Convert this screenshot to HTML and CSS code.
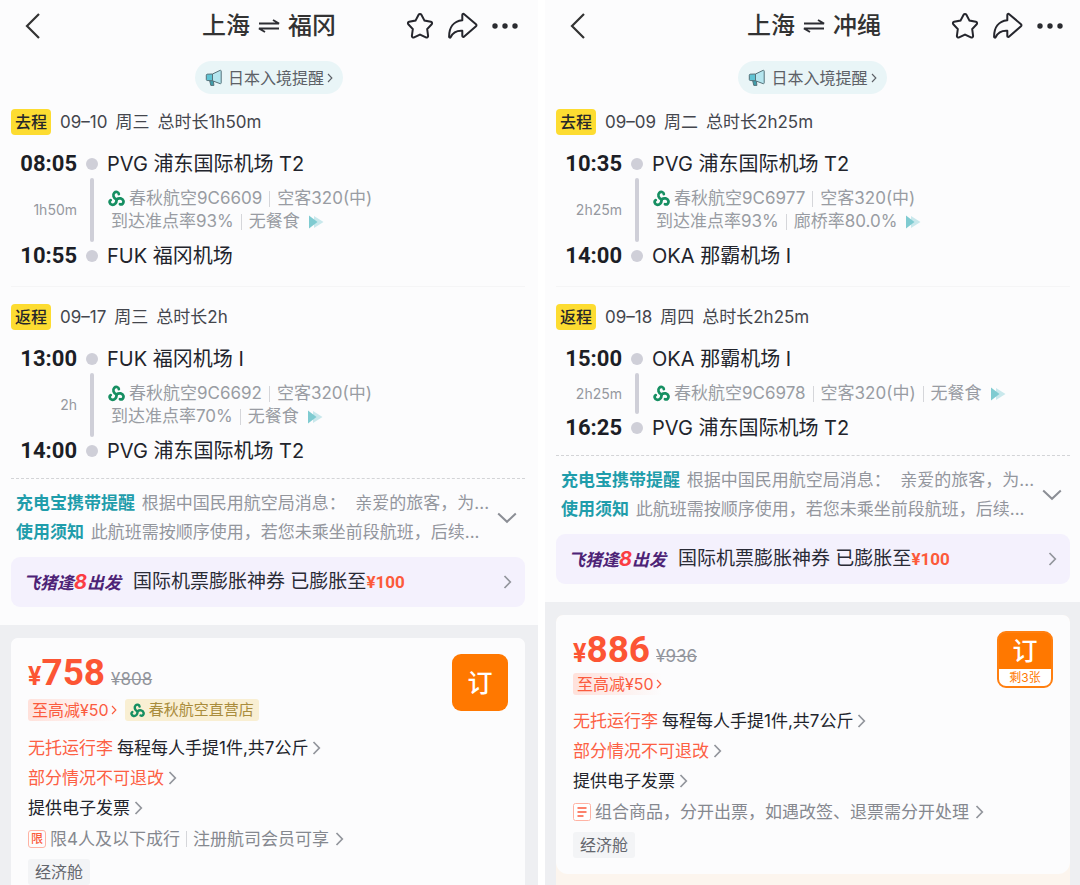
FILE: index.html
```html
<!DOCTYPE html>
<html lang="zh-CN">
<head>
<meta charset="utf-8">
<meta name="viewport" content="width=device-width, initial-scale=1">
<title>往返机票</title>
<link rel="stylesheet" href="styles.css">
</head>
<body>
<svg class="sprite" aria-hidden="true">
  <symbol id="i-back" viewBox="0 0 16 28"><path d="M14 2 2 14l12 12" fill="none" stroke="#333" stroke-width="2.2"/></symbol>
  <symbol id="i-swap" viewBox="0 0 22 14"><path d="M1 4.500h20L15 1M21 9.500H1l6 3.500" fill="none" stroke="#2c2d33" stroke-width="1.900" stroke-linejoin="bevel"/></symbol>
  <symbol id="i-star" viewBox="0 0 28 28"><path d="M12.600 2.800a1.600 1.600 0 0 1 2.800 0l3.100 5.800 6.400 1.200a1.500 1.500 0 0 1 .8 2.500l-4.500 4.800.9 6.700a1.500 1.500 0 0 1-2.200 1.600L14 22.600l-5.900 2.800a1.500 1.500 0 0 1-2.200-1.600l.9-6.700-4.500-4.800a1.500 1.500 0 0 1 .8-2.500l6.400-1.200z" fill="none" stroke="#25262d" stroke-width="2"/></symbol>
  <symbol id="i-share" viewBox="0 0 30 28"><path d="M16.200 2.200 28 12.200a1.300 1.300 0 0 1 0 2L16.200 24.600a1.100 1.100 0 0 1-1.900-.8v-5.100C8.500 18.300 5 20.200 2.600 25.200a.8.8 0 0 1-1.500-.3C1 15.600 5.500 9.200 14.300 8.300V3a1.100 1.100 0 0 1 1.900-.8z" fill="none" stroke="#25262d" stroke-width="2" stroke-linejoin="round"/></symbol>
  <symbol id="i-more" viewBox="0 0 26 6"><g fill="#2b2c31"><circle cx="3" cy="3" r="2.700"/><circle cx="13" cy="3" r="2.700"/><circle cx="23" cy="3" r="2.700"/></g></symbol>
  <symbol id="i-horn" viewBox="0 0 18 18"><path d="M4.500 11h3.800l.6 5.400H5.800z" fill="#3f9fac" stroke="#55727a"/><path d="M2 5.200 7.500 5v6.800L2.200 11.500a1 1 0 0 1-.9-1V6.200a1 1 0 0 1 .7-1z" fill="#5fc3d3" stroke="#55727a"/><path d="M7.500 5 15 1.400a.8.8 0 0 1 1.200.7v11.800a.8.8 0 0 1-1.200.7L7.500 11.800z" fill="#b5e6ef" stroke="#55727a"/></symbol>
  <symbol id="i-chev" viewBox="0 0 9 16"><path d="m1.500 2 5.800 6-5.800 6" fill="none" stroke="currentColor" stroke-width="1.700"/></symbol>
  <symbol id="i-down" viewBox="0 0 20 12"><path d="m1.200 1.500 8.800 8.300 8.800-8.300" fill="none" stroke="currentColor" stroke-width="2"/></symbol>
  <symbol id="i-spring" viewBox="0 0 18 18"><g fill="none" stroke="#168f62" stroke-width="2.900" stroke-linecap="round"><path d="M9 10C5.600 8.600 4.800 5 6.600 3 8.300 1.200 11.300 1.900 11.500 4.300"/><path d="M9 10C5.600 8.600 4.800 5 6.600 3 8.300 1.200 11.300 1.900 11.500 4.300" transform="rotate(120 9 10)"/><path d="M9 10C5.600 8.600 4.800 5 6.600 3 8.300 1.200 11.300 1.900 11.500 4.300" transform="rotate(240 9 10)"/></g></symbol>
  <symbol id="i-fast" viewBox="0 0 16 14"><path d="M6 1v12l9.500-6z" fill="#c9e8ec"/><path d="M1 .5v13L9.500 7z" fill="#7fcbd1"/></symbol>
  <symbol id="i-note" viewBox="0 0 18 18"><rect x=".5" y=".5" width="17" height="17" rx="2" fill="#fff" stroke="#ffb3a4"/><path d="M4.500 5h9M4.500 9h9M4.500 13h6" stroke="#fb5a3c" stroke-width="1.600"/></symbol>
</svg>

<main class="board">
  <section class="panel">
    <header class="topbar">
      <button class="icon-btn" aria-label="返回"><svg class="ic-back"><use href="#i-back"/></svg></button>
      <h1 class="route"><span>上海</span><svg class="ic-swap"><use href="#i-swap"/></svg><span>福冈</span></h1>
      <div class="actions">
        <button class="icon-btn" aria-label="收藏"><svg class="ic-star"><use href="#i-star"/></svg></button>
        <button class="icon-btn" aria-label="分享"><svg class="ic-share"><use href="#i-share"/></svg></button>
        <button class="icon-btn" aria-label="更多"><svg class="ic-more"><use href="#i-more"/></svg></button>
      </div>
    </header>
    <a class="entry-tip" href="#"><svg class="ic-horn"><use href="#i-horn"/></svg><span>日本入境提醒</span><svg class="ic-chev-s"><use href="#i-chev"/></svg></a>

    <article class="segment">
      <h2 class="seg-head"><span class="seg-tag">去程</span><span>09–10</span><span>周三</span><span>总时长1h50m</span></h2>
      <div class="leg">
        <time class="time">08:05</time><i class="dot"></i><p class="airport">PVG 浦东国际机场 T2</p>
        <span class="duration">1h50m</span><i class="track"></i>
        <div class="details">
          <p class="detail"><svg class="ic-spring"><use href="#i-spring"/></svg><span>春秋航空9C6609</span><i class="sep"></i><span>空客320(中)</span></p>
          <p class="detail detail-sub"><span>到达准点率93%</span><i class="sep"></i><span>无餐食</span><svg class="ic-fast"><use href="#i-fast"/></svg></p>
        </div>
        <time class="time">10:55</time><i class="dot"></i><p class="airport">FUK 福冈机场</p>
      </div>
    </article>
    <article class="segment">
      <h2 class="seg-head"><span class="seg-tag">返程</span><span>09–17</span><span>周三</span><span>总时长2h</span></h2>
      <div class="leg">
        <time class="time">13:00</time><i class="dot"></i><p class="airport">FUK 福冈机场 I</p>
        <span class="duration">2h</span><i class="track"></i>
        <div class="details">
          <p class="detail"><svg class="ic-spring"><use href="#i-spring"/></svg><span>春秋航空9C6692</span><i class="sep"></i><span>空客320(中)</span></p>
          <p class="detail detail-sub"><span>到达准点率70%</span><i class="sep"></i><span>无餐食</span><svg class="ic-fast"><use href="#i-fast"/></svg></p>
        </div>
        <time class="time">14:00</time><i class="dot"></i><p class="airport">PVG 浦东国际机场 T2</p>
      </div>
    </article>

    <div class="notices">
      <div class="notice-text">
        <p class="notice"><b>充电宝携带提醒</b> 根据中国民用航空局消息：&nbsp; 亲爱的旅客，为...</p>
        <p class="notice"><b>使用须知</b> 此航班需按顺序使用，若您未乘坐前段航班，后续...</p>
      </div>
      <button class="icon-btn notice-more" aria-label="展开"><svg class="ic-down"><use href="#i-down"/></svg></button>
    </div>
    <a class="promo" href="#"><span class="promo-logo">飞猪逢<em>8</em>出发</span><span class="promo-text">国际机票膨胀神券 已膨胀至<b>¥100</b></span><svg class="ic-chev"><use href="#i-chev"/></svg></a>

    <div class="offers">
      <article class="offer">
        <div class="offer-body">
          <div class="offer-main">
            <p class="price"><small>¥</small><strong>758</strong><del>¥808</del></p>
            <p class="tags"><a class="tag-cut" href="#">至高减¥50<svg class="ic-chev-s"><use href="#i-chev"/></svg></a><span class="tag-shop"><svg class="ic-spring-s"><use href="#i-spring"/></svg>春秋航空直营店</span></p>
            <ul class="rules">
              <li><a href="#"><span class="warn">无托运行李</span> 每程每人手提1件,共7公斤<svg class="ic-chev"><use href="#i-chev"/></svg></a></li>
              <li><a href="#"><span class="warn">部分情况不可退改</span><svg class="ic-chev"><use href="#i-chev"/></svg></a></li>
              <li><a href="#">提供电子发票<svg class="ic-chev"><use href="#i-chev"/></svg></a></li>
            </ul>
            <a class="limit" href="#"><span class="limit-tag">限</span><span>限4人及以下成行</span><i class="sep sep-tight"></i><span>注册航司会员可享</span><svg class="ic-chev"><use href="#i-chev"/></svg></a>
            <p class="cabin">经济舱</p>
          </div>
          <button class="book">订</button>
        </div>
      </article>
    </div>
  </section>

  <section class="panel">
    <header class="topbar">
      <button class="icon-btn" aria-label="返回"><svg class="ic-back"><use href="#i-back"/></svg></button>
      <h1 class="route"><span>上海</span><svg class="ic-swap"><use href="#i-swap"/></svg><span>冲绳</span></h1>
      <div class="actions">
        <button class="icon-btn" aria-label="收藏"><svg class="ic-star"><use href="#i-star"/></svg></button>
        <button class="icon-btn" aria-label="分享"><svg class="ic-share"><use href="#i-share"/></svg></button>
        <button class="icon-btn" aria-label="更多"><svg class="ic-more"><use href="#i-more"/></svg></button>
      </div>
    </header>
    <a class="entry-tip" href="#"><svg class="ic-horn"><use href="#i-horn"/></svg><span>日本入境提醒</span><svg class="ic-chev-s"><use href="#i-chev"/></svg></a>

    <article class="segment">
      <h2 class="seg-head"><span class="seg-tag">去程</span><span>09–09</span><span>周二</span><span>总时长2h25m</span></h2>
      <div class="leg">
        <time class="time">10:35</time><i class="dot"></i><p class="airport">PVG 浦东国际机场 T2</p>
        <span class="duration">2h25m</span><i class="track"></i>
        <div class="details">
          <p class="detail"><svg class="ic-spring"><use href="#i-spring"/></svg><span>春秋航空9C6977</span><i class="sep"></i><span>空客320(中)</span></p>
          <p class="detail detail-sub"><span>到达准点率93%</span><i class="sep"></i><span>廊桥率80.0%</span><svg class="ic-fast"><use href="#i-fast"/></svg></p>
        </div>
        <time class="time">14:00</time><i class="dot"></i><p class="airport">OKA 那霸机场 I</p>
      </div>
    </article>
    <article class="segment">
      <h2 class="seg-head"><span class="seg-tag">返程</span><span>09–18</span><span>周四</span><span>总时长2h25m</span></h2>
      <div class="leg">
        <time class="time">15:00</time><i class="dot"></i><p class="airport">OKA 那霸机场 I</p>
        <span class="duration">2h25m</span><i class="track"></i>
        <div class="details">
          <p class="detail"><svg class="ic-spring"><use href="#i-spring"/></svg><span>春秋航空9C6978</span><i class="sep"></i><span>空客320(中)</span><i class="sep"></i><span>无餐食</span><svg class="ic-fast"><use href="#i-fast"/></svg></p>
        </div>
        <time class="time">16:25</time><i class="dot"></i><p class="airport">PVG 浦东国际机场 T2</p>
      </div>
    </article>

    <div class="notices">
      <div class="notice-text">
        <p class="notice"><b>充电宝携带提醒</b> 根据中国民用航空局消息：&nbsp; 亲爱的旅客，为...</p>
        <p class="notice"><b>使用须知</b> 此航班需按顺序使用，若您未乘坐前段航班，后续...</p>
      </div>
      <button class="icon-btn notice-more" aria-label="展开"><svg class="ic-down"><use href="#i-down"/></svg></button>
    </div>
    <a class="promo" href="#"><span class="promo-logo">飞猪逢<em>8</em>出发</span><span class="promo-text">国际机票膨胀神券 已膨胀至<b>¥100</b></span><svg class="ic-chev"><use href="#i-chev"/></svg></a>

    <div class="offers">
      <article class="offer offer-compact">
        <div class="offer-body">
          <div class="offer-main">
            <p class="price"><small>¥</small><strong>886</strong><del>¥936</del></p>
            <p class="tags"><a class="tag-cut" href="#">至高减¥50<svg class="ic-chev-s"><use href="#i-chev"/></svg></a></p>
            <ul class="rules">
              <li><a href="#"><span class="warn">无托运行李</span> 每程每人手提1件,共7公斤<svg class="ic-chev"><use href="#i-chev"/></svg></a></li>
              <li><a href="#"><span class="warn">部分情况不可退改</span><svg class="ic-chev"><use href="#i-chev"/></svg></a></li>
              <li><a href="#">提供电子发票<svg class="ic-chev"><use href="#i-chev"/></svg></a></li>
            </ul>
            <a class="limit" href="#"><svg class="ic-note"><use href="#i-note"/></svg><span>组合商品，分开出票，如遇改签、退票需分开处理</span><svg class="ic-chev"><use href="#i-chev"/></svg></a>
            <p class="cabin">经济舱</p>
          </div>
          <button class="book book-stock"><span>订</span><small>剩3张</small></button>
        </div>
      </article>
    </div>
  </section>
</main>
</body>
</html>
```
FILE: styles.css
```css
* { box-sizing: border-box; }
body {
  margin: 0;
  background: #fff;
  color: #22242c;
  font-family: Inter, "Noto Sans CJK SC", sans-serif;
  font-size: 17px;
  line-height: 24px;
}
h1, h2, p, ul { margin: 0; padding: 0; font-weight: 400; }
ul { list-style: none; }
a { color: inherit; text-decoration: none; }
i { font-style: normal; }
svg { display: block; flex: none; }
button { font-family: inherit; border: 0; padding: 0; cursor: pointer; }
.sprite { position: absolute; width: 0; height: 0; }
.icon-btn { background: none; display: flex; align-items: center; }

.board { display: grid; grid-template-columns: 1fr 1fr; min-height: 100vh; }
.panel { --edge: 13px; display: flex; flex-direction: column; min-width: 0; margin-right: 2px; background: #fcfcfd; }
.panel + .panel { --edge: 10px; margin: 0 0 0 5px; }

.topbar { display: grid; grid-template-columns: 1fr auto 1fr; align-items: center; height: 52px; padding: 0 calc(var(--edge) + 7px) 0 20px; }
.topbar > .icon-btn { margin-left: 5px; }
.route { display: flex; align-items: center; gap: 8px; font-size: 24px; line-height: 32px; font-weight: 500; color: #333; }
.actions { display: flex; justify-content: flex-end; gap: 14px; }
.ic-back { width: 16px; height: 28px; }
.ic-swap { width: 22px; height: 14px; }
.ic-star { width: 28px; height: 28px; }
.ic-share { width: 30px; height: 28px; }
.ic-more { width: 26px; height: 6px; }

.entry-tip { align-self: center; display: flex; align-items: center; height: 33px; margin-top: 9px; padding: 0 10px; border-radius: 17px; background: #e9f5f7; color: #5c6066; font-size: 16px; }
.entry-tip span { margin: 0 3px 0 5px; }
.ic-horn { width: 18px; height: 18px; }
.ic-chev-s { width: 6px; height: 12px; }
.ic-chev { width: 9px; height: 16px; color: #92959c; }

.segment { margin: 0 var(--edge) 0 11px; padding: 15px 0 16px; }
.segment + .segment { border-top: 1px solid #f5f5f6; padding: 17px 0 13px; }
.seg-head { display: flex; align-items: center; gap: 8px; font-size: 17px; line-height: 26px; color: #44464d; }
.seg-tag { padding: 0 4px; margin-right: 1px; border-radius: 4px; background: #fddc31; color: #26262a; font-size: 16px; font-weight: 500; }

.leg { display: grid; grid-template-columns: 66px 12px 1fr; column-gap: 9px; align-items: center; margin-top: 15px; }
.time { font: 700 22px/28px Roboto, sans-serif; color: #1c1e26; text-align: right; }
.airport { font-size: 20px; line-height: 28px; }
.dot { width: 12px; height: 12px; border-radius: 50%; background: #cfcfd8; }
.track { align-self: stretch; justify-self: center; width: 4px; border-radius: 2px; background: #cfcfd8; }
.duration { font-size: 14px; line-height: 20px; color: #95989f; text-align: right; }
.details { padding: 9px 0 9px 1px; color: #999ca3; }
.detail { display: flex; align-items: center; font-size: 17px; line-height: 23px; white-space: nowrap; }
.detail-sub { padding-left: 3px; }
.sep { width: 1px; height: 16px; margin: 0 7px; background: #d5d6da; }
.sep-tight { margin: 0 6px; }
.ic-spring { width: 17px; height: 17px; margin-right: 4px; }
.ic-spring-s { width: 15px; height: 15px; margin-right: 4px; }
.ic-fast { width: 16px; height: 14px; margin-left: 8px; }

.notices { display: flex; align-items: center; justify-content: space-between; margin: 0 var(--edge) 0 11px; padding: 10px 8px 10px 5px; border-top: 1px dashed #d3d4d7; }
.notice-text { min-width: 0; }
.notice { font-size: 17px; line-height: 29px; color: #93969d; white-space: nowrap; overflow: hidden; text-overflow: ellipsis; }
.notice b { margin-right: 2px; font-weight: 700; color: #1f9dab; }
.notice-more { color: #8b8e95; }
.ic-down { width: 20px; height: 12px; }

.promo { display: flex; align-items: center; height: 50px; margin: 0 var(--edge) 18px 11px; padding: 0 13px 0 12px; border-radius: 9px; background: #f4f1fd; white-space: nowrap; }
.promo-logo { font-size: 17px; font-weight: 700; font-style: italic; color: #4d2376; }
.promo-logo em { color: #fb3d43; font-size: 20px; }
.promo-text { flex: 1; margin-left: 12px; font-size: 19px; color: #2a2b36; }
.promo-text b { font: 700 17px/24px Roboto, sans-serif; color: #fc5a3a; }

.offers { flex: 1; display: flex; flex-direction: column; padding: 13px var(--edge) 0 11px; background: #eeeff2; }
.offer { flex: 1; border-radius: 7px 7px 0 0; background: #fcfcfd; overflow: hidden; }
.offer-body { display: flex; align-items: flex-start; justify-content: space-between; padding: 16px 17px 0; border-radius: 7px 7px 12px 12px; background: #fcfcfd; }
.offer-compact { background: #fcf5ee; }
.offer-compact .offer-body { padding-bottom: 16px; }
.offer-main { min-width: 0; }
.price { display: flex; align-items: baseline; height: 37px; line-height: 37px; color: #fc5534; font-family: Roboto, sans-serif; }
.price small { font-size: 25px; font-weight: 700; }
.price strong { font-size: 37px; font-weight: 700; }
.price del { margin-left: 6px; font: 400 17px/24px Inter, sans-serif; color: #92959c; }
.tags { display: flex; align-items: center; gap: 8px; height: 22px; margin-top: 8px; }
.offer-compact .tags { margin-top: 5px; }
.tag-cut { display: flex; align-items: center; gap: 2px; padding-left: 4px; border-radius: 3px; background: linear-gradient(90deg, #ffe1db, #fcfcfd); color: #fb5b3e; font-size: 16px; line-height: 22px; }
.tag-shop { display: flex; align-items: center; padding: 0 5px; border-radius: 3px; background: #f9efd3; color: #a98c3c; font-size: 15px; line-height: 22px; }
.rules { margin-top: 12px; }
.offer-compact .rules { margin-top: 11px; }
.rules a { display: flex; align-items: center; gap: 4px; line-height: 30px; white-space: nowrap; }
.warn { color: #fc6044; }
.limit { display: flex; align-items: center; height: 24px; margin-top: 4px; color: #85888f; white-space: nowrap; }
.limit .ic-chev { margin-left: 6px; }
.limit-tag { width: 18px; margin-right: 4px; border: 1px solid #ffb3a4; border-radius: 3px; color: #fb5a3c; font-size: 12px; line-height: 16px; font-weight: 500; text-align: center; }
.ic-note { width: 18px; height: 18px; margin-right: 4px; }
.cabin { width: max-content; margin-top: 8px; padding: 0 7px; border-radius: 3px; background: #f3f4f6; color: #63666d; font-size: 16px; line-height: 26px; }
.book { flex: none; width: 56px; height: 57px; border-radius: 9px; background: #ff7800; color: #fff; font-size: 25px; line-height: 36px; font-weight: 500; }
.book-stock { display: flex; flex-direction: column; overflow: hidden; border: 2px solid #ff7f10; }
.book-stock span { width: 100%; }
.book-stock small { flex: 1; width: 100%; background: #fff; color: #ff7800; font-size: 12px; line-height: 17px; font-weight: 400; }
```
